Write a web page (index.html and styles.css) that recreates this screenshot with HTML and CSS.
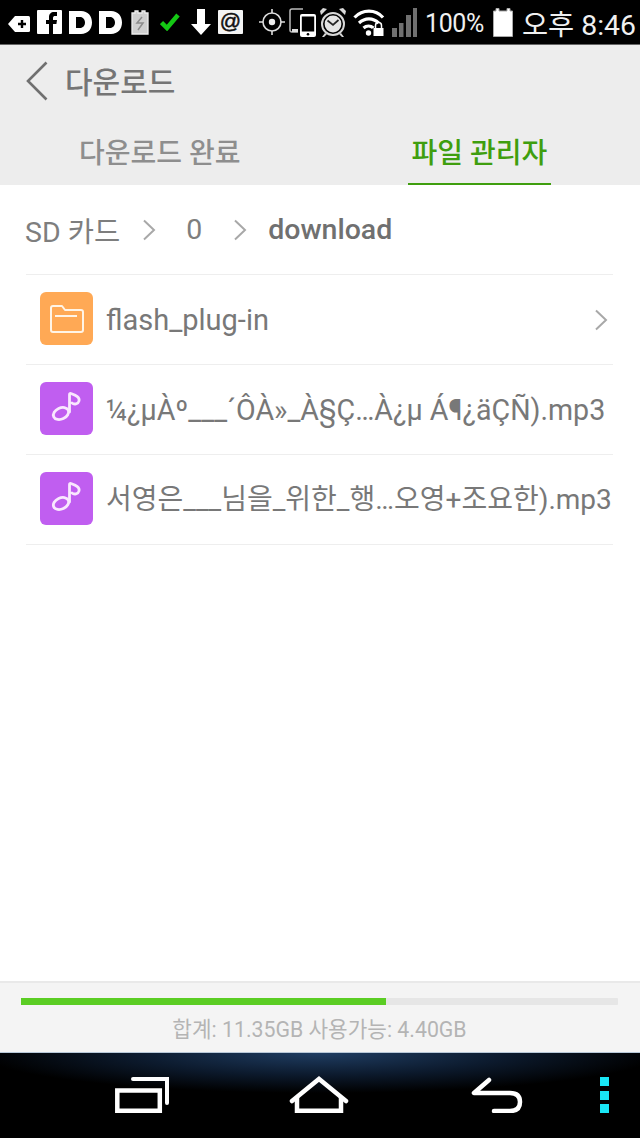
FILE: index.html
```html
<!DOCTYPE html>
<html lang="ko">
<head>
<meta charset="utf-8">
<title>다운로드</title>
<link rel="stylesheet" href="styles.css">
</head>
<body>
<div class="app">
  <div class="status">
    <svg class="si s-tag" viewBox="0 0 22 16"><path fill="#fff" d="M0 8 7 0h13.500a1.500 1.500 0 0 1 1.500 1.500v13a1.500 1.500 0 0 1-1.500 1.500H7z"/><path stroke="#000" stroke-width="2.400" d="M10 8h8M14 4v8"/></svg>
    <svg class="si s-f" viewBox="0 0 25 24"><rect width="25" height="24" rx="1" fill="#fff"/><path fill="#000" d="M12 24V14H9v-4h3V7c0-3 2-5 5-5h3v4h-2c-1 0-2 .5-2 2v2h4l-.6 4H16v10z"/></svg>
    <svg class="si s-d" viewBox="0 0 23 23"><path fill="#fff" fill-rule="evenodd" d="M0 0h12c7 0 11 5 11 11.500S19 23 12 23H0zM7 6v11h4c3 0 5-2.500 5-5.500S14 6 11 6z"/></svg>
    <svg class="si s-d2" viewBox="0 0 23 23"><path fill="#fff" fill-rule="evenodd" d="M0 0h12c7 0 11 5 11 11.500S19 23 12 23H0zM7 6v11h4c3 0 5-2.500 5-5.500S14 6 11 6z"/></svg>
    <svg class="si s-batt" viewBox="0 0 18 25"><path fill="#cfcfcf" stroke="#eee" stroke-width="1.300" d="M1 3h3V1h3v2h4V1h3v2h3v21H1z"/><path fill="none" stroke="#8c8c8c" stroke-width="1.500" d="M11 7 6 13h6l-5 7"/></svg>
    <svg class="si s-check" viewBox="0 0 20 18"><path fill="none" stroke="#14c814" stroke-width="4.500" d="M1.500 9.500 7 15 18 2"/></svg>
    <svg class="si s-down" viewBox="0 0 20 26"><path fill="#fff" d="M6 0h8v15h6L10 26 0 15h6z"/></svg>
    <svg class="si s-at" viewBox="0 0 25 24"><rect width="25" height="24" rx="1" fill="#f4f4f4"/><text x="12.500" y="18" class="at-text">@</text></svg>
    <svg class="si s-gps" viewBox="0 0 26 26"><circle cx="13" cy="13" r="9" fill="none" stroke="#ddd" stroke-width="1.600"/><circle cx="13" cy="13" r="3.200" fill="#eee"/><path stroke="#ddd" stroke-width="1.600" d="M13 0v4M13 22v4M0 13h4M22 13h4"/></svg>
    <svg class="si s-dev" viewBox="0 0 27 29"><path fill="none" stroke="#bbb" stroke-width="1.500" d="M14 1H3a2 2 0 0 0-2 2v19a2 2 0 0 0 2 2h6"/><path fill="#ddd" d="M3 21h6v3H3z"/><rect x="11" y="6" width="16" height="23" rx="2" fill="#fff"/><rect x="12.800" y="8.500" width="12.400" height="15" fill="#000"/><circle cx="19" cy="26.200" r="1.300" fill="#000"/></svg>
    <svg class="si s-alarm" viewBox="0 0 26 29"><circle cx="13" cy="16" r="11" fill="#000" stroke="#d8d8d8" stroke-width="2"/><circle cx="13" cy="16" r="8.400" fill="#e4e4e4"/><path fill="none" stroke="#222" stroke-width="1.700" d="M7.500 12.500 13 17l5.500-5"/><path fill="#d8d8d8" d="M1 7 7 1 3 0 0 3zM25 7l-6-6 4-1 3 3zM5 25l-3 4h2l3-3zM21 25l3 4h-2l-3-3z"/></svg>
    <svg class="si s-wifi" viewBox="0 0 32 27"><g fill="none" stroke="#fff" stroke-width="3.200"><path d="M1.500 8.500c8-8.500 21-8.500 28.500 0"/><path d="M6 14c6-5.500 14-5.500 19.500 0"/><path d="M10.500 19c3-2.500 7-2.500 10 0"/></g><circle cx="15.500" cy="24" r="2.700" fill="#fff"/><path fill="none" stroke="#fff" stroke-width="1.500" d="M22.500 19v-2.500a3 3 0 0 1 6 0v2.500"/><rect x="19.500" y="19" width="11" height="8" fill="#000"/><rect x="20.500" y="19" width="10" height="8" fill="#fff"/></svg>
    <svg class="si s-sig" viewBox="0 0 25 29"><path fill="#707070" d="M0 20h5v9H0zM7 15h4.500v14H7zM14 7h5v22h-5zM21 0h4v29h-4z"/></svg>
    <span class="st-pct">100%</span>
    <svg class="si s-full" viewBox="0 0 20 29"><path fill="#fff" stroke="#aaa" d="M.5 3h2.500V.5h3V3h8V.5h3V3h2.500v25.500H.5z"/></svg>
    <span class="st-time">오후 8:46</span>
  </div>

  <header class="head">
    <div class="title-row">
      <svg class="back" viewBox="0 0 22 40"><path fill="none" stroke="#707070" stroke-width="2.600" d="M20.500 1.500 2 20l18.500 18.500"/></svg>
      <h1 class="title">다운로드</h1>
    </div>
    <div class="tabs">
      <div class="tab">다운로드 완료</div>
      <div class="tab active">파일 관리자</div>
    </div>
  </header>

  <nav class="crumbs">
    <span>SD 카드</span>
    <svg class="chev" viewBox="0 0 14 22"><path fill="none" stroke="#a8a8a8" stroke-width="2" d="M2 1.500 12 11 2 20.500"/></svg>
    <span class="c-zero">0</span>
    <svg class="chev chev-last" viewBox="0 0 14 22"><path fill="none" stroke="#a8a8a8" stroke-width="2" d="M2 1.500 12 11 2 20.500"/></svg>
    <span class="c-cur">download</span>
  </nav>

  <main class="list">
    <div class="row">
      <span class="ico folder"><svg viewBox="0 0 34 28"><path fill="none" stroke="#fff4e6" stroke-width="2" stroke-linejoin="round" d="M1 25V3q0-2 2-2h9l3 4h16q2 0 2 2v18q0 2-2 2H3q-2 0-2-2zM5 11h22"/></svg></span>
      <span class="name name-a">flash_plug-in</span>
      <svg class="row-chev" viewBox="0 0 14 22"><path fill="none" stroke="#a8a8a8" stroke-width="2" d="M2 1.500 12 11 2 20.500"/></svg>
    </div>
    <div class="row">
      <span class="ico music"><svg viewBox="0 0 53 53"><g fill="none" stroke="#f9e8fe" stroke-width="2.800" stroke-linecap="round"><ellipse cx="21" cy="31.500" rx="8" ry="5.600" transform="rotate(-25 21 31.500)"/><path d="M29.500 30V12.500q0-1.500 2-.7C36 13.500 40 15 39 19c-.7 3-5 3.800-7 2"/></g></svg></span>
      <span class="name name-b">¼¿µÀº___´ÔÀ»_À§Ç…À¿µ Á¶¿äÇÑ).mp3</span>
    </div>
    <div class="row">
      <span class="ico music"><svg viewBox="0 0 53 53"><g fill="none" stroke="#f9e8fe" stroke-width="2.800" stroke-linecap="round"><ellipse cx="21" cy="31.500" rx="8" ry="5.600" transform="rotate(-25 21 31.500)"/><path d="M29.500 30V12.500q0-1.500 2-.7C36 13.500 40 15 39 19c-.7 3-5 3.800-7 2"/></g></svg></span>
      <span class="name name-c">서영은___님을_위한_행…오영+조요한).mp3</span>
    </div>
  </main>

  <footer class="storage">
    <div class="bar"><div class="bar-fill" style="width:61.100%"></div></div>
    <div class="storage-text">합계: 11.35GB 사용가능: 4.40GB</div>
  </footer>

  <div class="navbar">
    <svg class="n-recent" viewBox="0 0 54 36"><path fill="none" stroke="#fff" stroke-width="4.500" d="M2.300 13.500h42.500v20.200H2.300z"/><path fill="none" stroke="#fff" stroke-width="4" stroke-linecap="round" d="M18 2h34v24"/></svg>
    <svg class="n-home" viewBox="0 0 60 37"><path fill="none" stroke="#fff" stroke-width="4.500" stroke-linecap="round" d="M3 25 30 3l27 22"/><path fill="none" stroke="#fff" stroke-width="4.500" d="M8 21v13.700h44V21"/></svg>
    <svg class="n-back" viewBox="0 0 54 36"><path fill="none" stroke="#fff" stroke-width="4.500" stroke-linecap="round" stroke-linejoin="round" d="M19 3 4 16h36q10 0 10 9t-10 9H24"/></svg>
    <div class="n-menu"><i></i><i></i><i></i></div>
  </div>
</div>
</body>
</html>
```
FILE: styles.css
```css
* { box-sizing: border-box; }
html, body { margin: 0; padding: 0; background: #fff; }
.app {
  width: 640px;
  height: 1138px;
  display: flex;
  flex-direction: column;
  overflow: hidden;
  font-family: Roboto, "Noto Sans CJK KR", sans-serif;
  color: #6e6e6e;
}

/* status bar */
.status {
  height: 45px;
  flex: none;
  background: #000;
  border-bottom: 1px solid #666;
  display: flex;
  align-items: center;
  padding-left: 8px;
  color: #f0f0f0;
}
.si { display: block; flex: none; }
.s-tag { width: 22px; height: 16px; margin: 3px 7px 0 0; }
.s-f { width: 25px; height: 24px; margin-right: 7px; }
.s-d { width: 23px; height: 23px; margin-right: 7px; }
.s-d2 { width: 23px; height: 23px; margin-right: 9px; }
.s-batt { width: 18px; height: 25px; margin-right: 11px; }
.s-check { width: 20px; height: 18px; margin-right: 11px; }
.s-down { width: 20px; height: 26px; margin-right: 7px; }
.s-at { width: 25px; height: 24px; margin-right: 16px; }
.at-text { font: 21px "Liberation Sans", sans-serif; fill: #111; text-anchor: middle; stroke: #111; stroke-width: .5px; }
.s-gps { width: 26px; height: 26px; margin-right: 4px; }
.s-dev { width: 27px; height: 29px; margin: 1px 4px 0 0; }
.s-alarm { width: 26px; height: 29px; margin-right: 7px; }
.s-wifi { width: 32px; height: 27px; margin: 1px 7px 0 0; }
.s-sig { width: 25px; height: 29px; margin: 1px 8px 0 0; }
.st-pct { font-size: 25px; width: 64px; letter-spacing: -0.4px; margin: 2px 4px 0 0; }
.s-full { width: 20px; height: 29px; margin-right: 9px; }
.st-time { font-size: 28.4px; white-space: nowrap; margin-top: 1px; }

/* header */
.head { background: #ededed; flex: none; height: 140px; display: flex; flex-direction: column; }
.title-row { height: 72px; display: flex; align-items: center; padding-left: 26px; gap: 17px; }
.back { width: 22px; height: 40px; flex: none; }
.title { margin: 0; padding-top: 3px; font-size: 30px; font-weight: 500; color: #757575; line-height: 1; }
.tabs { display: flex; height: 68px; padding: 0 89px 0 79px; justify-content: space-between; }
.tab { height: 68px; line-height: 73px; font-size: 28px; color: #8e8e8e; font-weight: 500; text-align: center; white-space: nowrap; }
.tab.active { color: #3f9e0e; border-bottom: 2px solid #3f9e0e; width: 143px; }

/* breadcrumbs */
.crumbs { height: 89px; flex: none; display: flex; align-items: center; padding-left: 25px; font-size: 28.5px; color: #7e7e7e; }
.chev { width: 14px; height: 22px; flex: none; margin: 0 30px 0 22px; }
.chev-last { margin: 0 21px 0 31px; }
.c-cur { color: #707070; font-weight: 500; }

/* list */
.list { margin: 0 27px 0 26px; border-top: 1px solid #eee; flex: 1; }
.row { height: 90px; display: flex; align-items: center; padding: 0 0 2px 14px; border-bottom: 1px solid #eee; }
.ico { width: 53px; height: 53px; border-radius: 6px; flex: none; display: flex; align-items: center; justify-content: center; margin-right: 14px; }
.folder { background: #ffa955; }
.folder svg { width: 34px; height: 28px; }
.music { background: #c05ef0; }
.music svg { width: 53px; height: 53px; }
.name { color: #787878; white-space: nowrap; flex: 1; margin-left: -1px; }
.name-a { font-size: 29px; padding-top: 3px; }
.name-b { font-size: 28.6px; padding-top: 3px; }
.name-c { font-size: 28px; padding-bottom: 4px; }
.row-chev { width: 14px; height: 22px; flex: none; margin: 2px 5px 0 0; }

/* storage */
.storage { height: 71px; flex: none; background: #f4f4f4; border-top: 2px solid #e9e9e9; padding: 15px 22px 0 21px; }
.bar { height: 7px; background: #e6e6e6; border-radius: 1px; }
.bar-fill { height: 7px; background: #5bcd24; }
.storage-text { margin-top: 11px; text-align: center; font-size: 21.3px; color: #b4b4b4; line-height: 28px; white-space: nowrap; }

/* nav */
.navbar {
  height: 86px;
  flex: none;
  background: radial-gradient(ellipse 340px 40px at 50% 0, #1f3d62 0, #0c1a2d 55%, #000 100%);
  border-top: 1px solid #b8c8d8;
  display: flex;
  align-items: flex-start;
  padding: 24px 31px 0 115px;
}
.n-recent { width: 54px; height: 36px; flex: none; margin-right: 120px; }
.n-home { width: 60px; height: 37px; flex: none; margin: -1px 121px 0 0; }
.n-back { width: 54px; height: 36px; flex: none; margin-right: 76px; }
.n-menu { display: flex; flex-direction: column; gap: 4.5px; }
.n-menu i { display: block; width: 9px; height: 9px; background: #19e6f5; }
```
